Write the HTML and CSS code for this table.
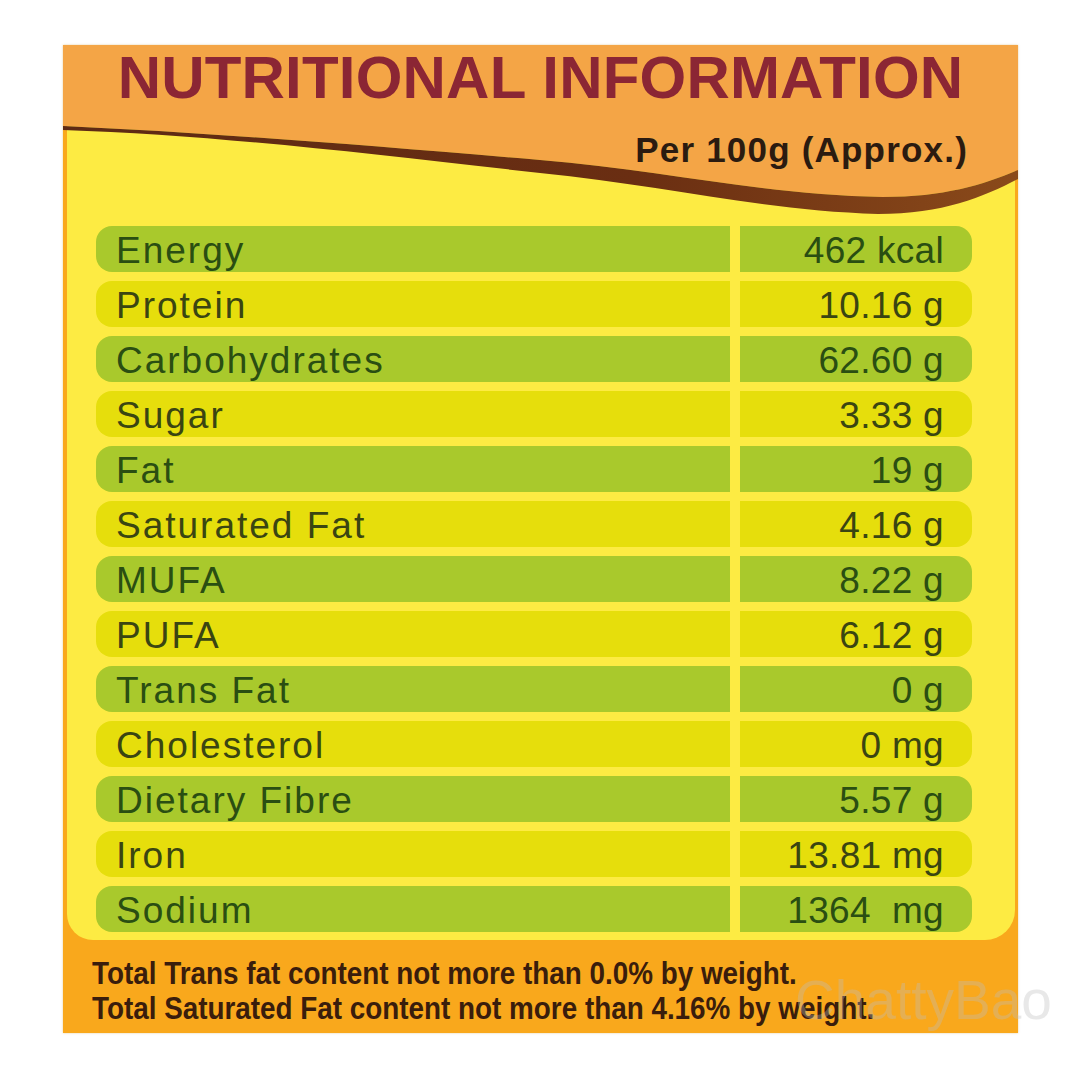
FILE: index.html
```html
<!DOCTYPE html>
<html lang="en">
<head>
<meta charset="utf-8">
<title>Nutritional Information</title>
<link rel="stylesheet" href="styles.css">
</head>
<body>
<div class="panel">
  <div class="head">
    <svg class="head-bg" width="955" height="170" viewBox="0 0 955 170" aria-hidden="true">
      <defs>
        <linearGradient id="brown" x1="0" y1="0" x2="1" y2="0">
          <stop offset="0" stop-color="#5e2a14"/>
          <stop offset="0.6" stop-color="#6a2e12"/>
          <stop offset="1" stop-color="#8a4a1a"/>
        </linearGradient>
      </defs>
      <rect x="0" y="0" width="955" height="170" fill="#f9a81c"/>
      <rect x="4" y="0" width="948" height="170" fill="#fdeb43"/>
      <path d="M0,0 H955 V125 C920,140 880,152 820,152 C700,150 600,125 477,115 C300,100 150,88 0,81 Z" fill="#f4a546"/>
      <path d="M0,81 C150,88 300,100 477,115 C600,125 700,150 820,152 C880,152 920,140 955,125 L955,134 C920,152 880,169 815,169 C700,166 600,140 477,128 C300,108 150,90 0,85 Z" fill="url(#brown)"/>
    </svg>
    <h1 class="title">NUTRITIONAL INFORMATION</h1>
    <p class="per">Per 100g (Approx.)</p>
  </div>
  <div class="body">
    <div class="row g"><span class="label">Energy</span><span class="val">462 kcal</span></div>
    <div class="row y"><span class="label">Protein</span><span class="val">10.16 g</span></div>
    <div class="row g"><span class="label">Carbohydrates</span><span class="val">62.60 g</span></div>
    <div class="row y"><span class="label">Sugar</span><span class="val">3.33 g</span></div>
    <div class="row g"><span class="label">Fat</span><span class="val">19 g</span></div>
    <div class="row y"><span class="label">Saturated Fat</span><span class="val">4.16 g</span></div>
    <div class="row g"><span class="label">MUFA</span><span class="val">8.22 g</span></div>
    <div class="row y"><span class="label">PUFA</span><span class="val">6.12 g</span></div>
    <div class="row g"><span class="label">Trans Fat</span><span class="val">0 g</span></div>
    <div class="row y"><span class="label">Cholesterol</span><span class="val">0 mg</span></div>
    <div class="row g"><span class="label">Dietary Fibre</span><span class="val">5.57 g</span></div>
    <div class="row y"><span class="label">Iron</span><span class="val">13.81 mg</span></div>
    <div class="row g"><span class="label">Sodium</span><span class="val">1364  mg</span></div>
  </div>
  <div class="foot">
    <p class="note">Total Trans fat content not more than 0.0% by weight.</p>
    <p class="note">Total Saturated Fat content not more than 4.16% by weight.</p>
  </div>
  <div class="wm">ChattyBao</div>
</div>
</body>
</html>
```
FILE: styles.css
```css
html, body {
  margin: 0;
  padding: 0;
  background: #ffffff;
}
body {
  width: 1080px;
  height: 1080px;
  overflow: hidden;
  font-family: "Liberation Sans", Arial, sans-serif;
}
.panel {
  position: relative;
  margin: 45px 0 0 63px;
  width: 955px;
  height: 988px;
  background: #f9a81c;
  display: flex;
  flex-direction: column;
  box-shadow: 0 0 2px rgba(200, 160, 60, 0.5);
}
.head {
  position: relative;
  height: 170px;
  flex: none;
}
.head-bg {
  position: absolute;
  left: 0;
  top: 0;
  display: block;
}
.title {
  position: relative;
  margin: 0;
  padding-top: 2px;
  font-size: 60px;
  line-height: 61px;
  font-weight: 700;
  letter-spacing: 0.2px;
  color: #8b2634;
  text-align: center;
}
.per {
  position: relative;
  margin: 0;
  padding-top: 22px;
  padding-right: 50px;
  text-align: right;
  font-size: 35px;
  line-height: 40px;
  font-weight: 700;
  letter-spacing: 1.2px;
  color: #2b1b10;
}
.body {
  margin-left: 4px;
  margin-right: 3px;
  padding: 11px 0 8px 29px;
  background: #fdeb43;
  border-radius: 0 0 30px 26px;
  display: flex;
  flex-direction: column;
  gap: 9px;
}
.row {
  display: grid;
  grid-template-columns: 634px 232px;
  column-gap: 10px;
  height: 46px;
}
.row span {
  display: block;
  font-size: 37px;
  line-height: 46px;
  padding-top: 2px;
  height: 44px;
  white-space: pre;
}
.label {
  padding-left: 20px;
  letter-spacing: 2px;
  border-radius: 16px 0 0 16px;
}
.val {
  padding-right: 28px;
  text-align: right;
  letter-spacing: 0.3px;
  border-radius: 0 16px 16px 0;
}
.g span {
  background: #a9c92c;
  color: #2a4e12;
}
.y span {
  background: #e6de0c;
  color: #3a4512;
}
.foot {
  flex: 1;
  padding: 16px 0 0 29px;
}
.note {
  margin: 0;
  font-weight: 700;
  font-size: 32px;
  line-height: 35px;
  color: #3a1d0c;
  white-space: nowrap;
  transform: scaleX(0.87);
  transform-origin: left center;
}
.wm {
  position: absolute;
  left: 732px;
  top: 925px;
  font-size: 55px;
  line-height: 60px;
  color: rgba(190, 190, 190, 0.35);
  white-space: nowrap;
}
```
